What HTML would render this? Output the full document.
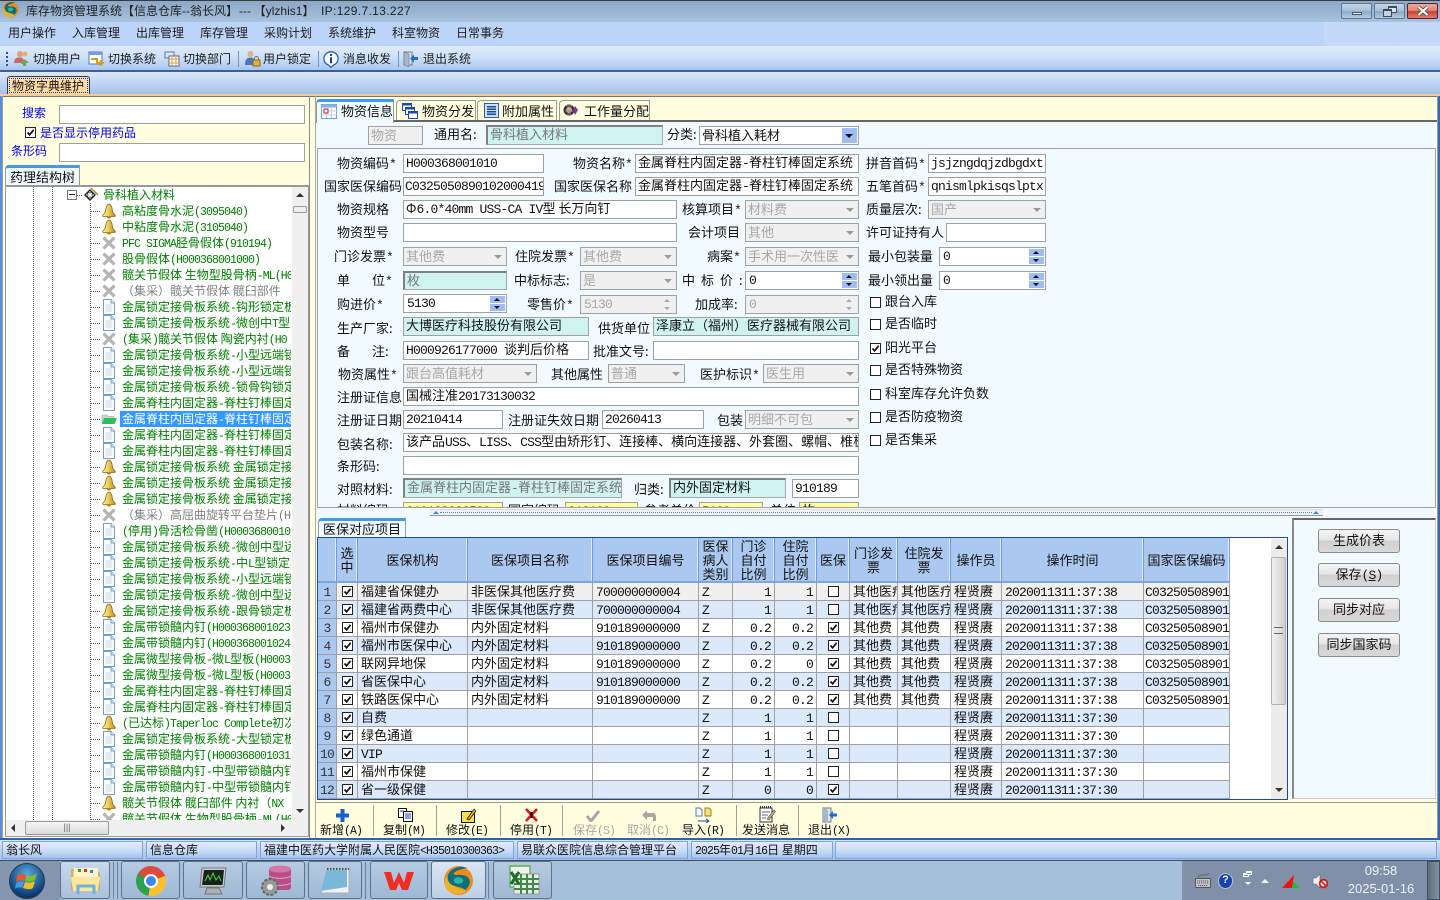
<!DOCTYPE html>
<html lang="zh"><head><meta charset="utf-8"><title>库存物资管理系统</title>
<style>
html,body{margin:0;padding:0}
body{width:1440px;height:900px;overflow:hidden;position:relative;background:#ffffe0;font:13px/1.2 "WenQuanYi Zen Hei","Noto Sans CJK SC",sans-serif;color:#111}
div,span,svg{box-sizing:border-box}
i{font:normal 13px/1 "Liberation Mono",monospace;letter-spacing:-.8px}
.tr i,.st i,.lb i{font-size:11.5px;letter-spacing:-.9px}
.a,.l,.f,.c,.sb,.cb,.mi,.ti,.bt,.st,.tb{position:absolute}
.l{white-space:pre;line-height:17px;height:19px}
.f{height:19px;line-height:13px;background:#fff;border:1px solid #a0a0a0;padding-left:2px;white-space:nowrap;overflow:hidden}
.y{background:#cff3f1;border:1px solid #a8a8a8;border-left:2px solid #808080;border-top:2px solid #808080;line-height:13px}
.c{height:19px;line-height:16px;background:#f0f0f0;border:1px solid #a0a0a0;color:#a8a8a8;padding-left:2px;white-space:nowrap;overflow:hidden}
.c:after{content:"";position:absolute;right:4px;top:7px;border:4px solid transparent;border-top:4px solid #999;border-bottom:0}
.c.nd{line-height:15px}
.c.nd:after{display:none}
.sb{height:19px;line-height:13px;background:#fff;border:1px solid #a0a0a0;padding-left:3px}
.sb u,.sb s{position:absolute;right:1px;width:15px;height:7px;background:#9fbcf5;text-decoration:none}
.sb u{top:1px}.sb s{top:9px}
.sb u:after,.sb s:after{content:"";position:absolute;left:4px;top:2px;border:3px solid transparent}
.sb u:after{border-bottom:3px solid #111;border-top:0}.sb s:after{border-top:3px solid #111;border-bottom:0}
.sb.d{background:#f0f0f0;color:#a8a8a8}.sb.d u,.sb.d s{background:#f0f0f0}
.sb.d u:after{border-bottom-color:#aaa}.sb.d s:after{border-top-color:#aaa}
.cb{width:11px;height:11px;display:block}
.mi{top:24px;font-size:12px;line-height:18px;color:#1c1c1c}
.ti{top:50px;font-size:12px;line-height:18px;color:#1c1c1c}
.sp{position:absolute;top:51px;width:1px;height:16px;background:#7d93b5}
.t{position:absolute;height:20px;line-height:19px;background:#ffffe0;border:1px solid #999;border-bottom:0;border-radius:4px 0 0 0;text-align:center;white-space:nowrap;overflow:hidden}
.t.on{background:#f0faff;border-top:3px solid #3d9be9;line-height:17px}
.tr{position:absolute;left:5px;top:187px;width:286px;height:633px;overflow:hidden;font-size:12px;white-space:nowrap;color:#008000}
.r{height:16px;line-height:16px;padding-left:117px;position:relative}
.r svg{position:absolute;left:96px;top:0;width:16px;height:16px}
.r:before{content:"";position:absolute;left:86px;top:8px;width:9px;border-top:1px dotted #555}
.r.o:before{display:none}
.g{color:#808080}
.v{position:absolute;border-left:1px dotted #555}
table{border-collapse:separate;border-spacing:0;table-layout:fixed;width:912px;position:absolute;left:0;top:0}
th{height:45px;box-sizing:border-box;padding:0;background:#abc9f0;font-weight:normal;line-height:14px;border-right:1px solid #6f9ad8;border-bottom:2px solid #7fa6e0;box-shadow:inset -1px 0 #dfeaff;overflow:hidden}
tr{height:18px}
td{height:18px;padding:0 0 0 3px;border-right:1px solid #a0a0a0;border-bottom:1px solid #a0a0a0;overflow:hidden;white-space:nowrap;line-height:15px;vertical-align:top;box-sizing:border-box}
td.n{background:#abc9f0;text-align:center;padding:0;color:#333}
td.k{padding:0;text-align:center}td.k svg{display:block;margin:3px auto 0;width:11px;height:11px}
td.d{text-align:right;padding:0 3px 0 0}
tr.w td{background:#fff}tr.b td{background:#dce9fb}tr.h td{background:#f0f0f0}
tr td.n{background:#abc9f0}
.bt{left:1318px;width:82px;height:24px;line-height:20px;border:1px solid #8a8a8a;border-radius:3px;text-align:center;background:linear-gradient(#f4f4f4,#e6e6e6 45%,#d0d0d0 50%,#d8d8d8);color:#111}
.st{top:841px;height:18px;line-height:16px;font-size:12px;padding-left:3px;border:1px solid #7fa5d8;background:linear-gradient(#e2edfc,#c8dcf7 55%,#a5c3ee);white-space:nowrap;overflow:hidden}
.tb{top:861px;height:38px;border:1px solid #5f7286;border-radius:3px;background:linear-gradient(#b6cbe2,#9fb8d4)}
.lb{position:absolute;top:821px;width:62px;text-align:center;line-height:17px;height:15px;overflow:hidden;white-space:nowrap;font-size:12px}
.gy{color:#a8a8a8}
.sep{position:absolute;top:805px;width:1px;height:31px;background:#a0a0a0}
.ic{position:absolute}
</style></head><body>
<svg width="0" height="0" style="position:absolute">
<defs>
<linearGradient id="gd" x1="0" x2="1"><stop offset="0" stop-color="#fff2a8"/><stop offset=".5" stop-color="#eec850"/><stop offset="1" stop-color="#b08a20"/></linearGradient>
<symbol id="b" viewBox="0 0 16 16"><path d="M8 1C5.5 1.6 5 4.5 4.6 7.5 4.3 10 2.6 11.2 1.6 12.6L2 13.5H14L14.4 12.6C13.4 11.2 11.7 10 11.4 7.5 11 4.5 10.5 1.6 8 1Z" fill="url(#gd)" stroke="#8a6c18" stroke-width=".8"/><ellipse cx="8" cy="14.2" rx="2" ry="1.3" fill="#b08a20"/></symbol>
<symbol id="x" viewBox="0 0 16 16"><path d="M2.5 2.5L13.5 13.5M13.5 2.5L2.5 13.5" stroke="#b4b4b4" stroke-width="3.2"/></symbol>
<symbol id="d" viewBox="0 0 16 16"><path d="M2.5 .5H10L13.5 4V15.5H2.5Z" fill="#fff" stroke="#6c9cd0"/><path d="M10 .5V4H13.5" fill="#e4eefa" stroke="#6c9cd0"/><path d="M4.5 6H11.5M4.5 8H11.5M4.5 10H11.5M4.5 12H11.5" stroke="#cfd8e4"/></symbol>
<symbol id="ck" viewBox="0 0 11 11"><rect x=".5" y=".5" width="10" height="10" fill="#fff" stroke="#222"/><path d="M2.5 5.5L4.6 7.8 8.6 2.8" fill="none" stroke="#111" stroke-width="1.7"/></symbol>
<symbol id="un" viewBox="0 0 11 11"><rect x=".5" y=".5" width="10" height="10" fill="#fff" stroke="#222"/></symbol>
<symbol id="lg" viewBox="0 0 32 32"><circle cx="16" cy="16" r="15" fill="#ef8a1d"/><path d="M1.5 20C5 31 17 33 24 27 20 24 9 26 6 10 2 13 1 17 1.5 20Z" fill="#efb02a"/><path d="M25 3C14-1 3 7 5 15 7 24 19 21 23 26 28 21 29 17 26 13 21 8 12 12 11 9 12 6 20 4 25 3Z" fill="#0f6f78"/><ellipse cx="16" cy="16" rx="5" ry="3.5" fill="#2bb3a4"/></symbol>
</defs></svg>

<!-- title bar -->
<div class="a" style="left:0;top:0;width:1440px;height:22px;background:linear-gradient(#3a3a3a 0,#3a3a3a 1px,#8ba8c6 1px,#a8c2df)"></div>
<svg class="ic" style="left:2px;top:1px" width="17" height="17"><use href="#lg"/></svg>
<div class="a" style="left:26px;top:2px;font-size:12px;line-height:18px;color:#222;white-space:pre">库存物资管理系统【信息仓库<span style="font-family:'Liberation Sans'">--</span>翁长风】<span style="font-family:'Liberation Sans';margin-left:1px">---</span> 【<span style="font-family:'Liberation Sans'">ylzhis1</span>】</div>
<div class="a" style="left:321px;top:2px;font:12px/18px 'Liberation Sans',sans-serif;color:#222;letter-spacing:.35px;white-space:pre">IP:129.7.13.227</div>
<div class="a" style="left:1341px;top:3px;width:31px;height:16px;border:1px solid #5e7690;border-radius:2px;background:linear-gradient(#c4d6e8,#a5bdd6 50%,#8fa9c5 55%,#b5cadf)"><div class="a" style="left:10px;top:8px;width:10px;height:3px;background:#e6eaef;border:1px solid #4a5866"></div></div>
<div class="a" style="left:1374px;top:3px;width:31px;height:16px;border:1px solid #5e7690;border-radius:2px;background:linear-gradient(#c4d6e8,#a5bdd6 50%,#8fa9c5 55%,#b5cadf)"><div class="a" style="left:13px;top:2px;width:9px;height:7px;border:1px solid #3e4c5a;border-top-width:2px;background:#dfe6ee"></div><div class="a" style="left:8px;top:5px;width:9px;height:8px;border:1px solid #3e4c5a;border-top-width:2px;background:#c6d2de"></div></div>
<div class="a" style="left:1407px;top:3px;width:31px;height:16px;border:1px solid #5b2030;border-radius:2px;background:linear-gradient(#eba89a,#e08a78 45%,#cc3f30 55%,#e08070)"><svg class="ic" style="left:9px;top:2px" width="12" height="10"><path d="M1.5 1L10.5 9M10.5 1L1.5 9" stroke="#3a3a3a" stroke-width="3.6"/><path d="M1.5 1L10.5 9M10.5 1L1.5 9" stroke="#f4f4f4" stroke-width="2.2"/></svg></div>

<!-- menu -->
<div class="a" style="left:0;top:22px;width:1440px;height:24px;background:#c3d9f7"></div>
<div class="a" style="left:0;top:22px;width:1324px;height:24px;background:#bcd4f8"></div>
<span class="mi" style="left:8px">用户操作</span><span class="mi" style="left:72px">入库管理</span><span class="mi" style="left:136px">出库管理</span><span class="mi" style="left:200px">库存管理</span><span class="mi" style="left:264px">采购计划</span><span class="mi" style="left:328px">系统维护</span><span class="mi" style="left:392px">科室物资</span><span class="mi" style="left:456px">日常事务</span>

<!-- toolbar -->
<div class="a" style="left:0;top:46px;width:1440px;height:26px;background:linear-gradient(#dfeafb,#cddff8 50%,#a8c6f0);border-bottom:2px solid #3d5f95"></div>
<div class="a" style="left:6px;top:52px;width:2px;height:14px;border-left:2px dotted #33527f"></div>
<svg class="ic" style="left:13px;top:50px" width="17" height="17" viewBox="0 0 17 17"><circle cx="7" cy="4" r="3" fill="#e0a070"/><circle cx="12" cy="4" r="2.6" fill="#e8b080"/><path d="M1 13C1 8 4 7.5 7 7.5S11 9 11 13Z" fill="#c86a6a"/><path d="M8 14L12 9 16 13 13 13V16H10V14Z" fill="#60b050"/></svg>
<span class="ti" style="left:33px">切换用户</span>
<svg class="ic" style="left:88px;top:51px" width="17" height="17" viewBox="0 0 17 17"><rect x="1" y="1" width="13" height="12" fill="#fff" stroke="#4a78c0"/><rect x="1" y="1" width="13" height="3" fill="#6f9fe0"/><path d="M3 8H9L9 12 15 12M12 9.5L15 12 12 14.5" fill="none" stroke="#e09a18" stroke-width="2"/></svg>
<span class="ti" style="left:108px">切换系统</span>
<svg class="ic" style="left:164px;top:51px" width="16" height="16" viewBox="0 0 16 16"><rect x="1" y="1" width="9" height="6" fill="#dfe8f4" stroke="#4a78c0"/><rect x="5" y="5" width="10" height="10" fill="#fff" stroke="#666"/><path d="M5 8H15M8 5V15M12 5V15M5 12H15" stroke="#e09a48"/></svg>
<span class="ti" style="left:183px">切换部门</span>
<div class="sp" style="left:238px"></div>
<svg class="ic" style="left:244px;top:50px" width="17" height="17" viewBox="0 0 17 17"><circle cx="6.5" cy="4" r="3" fill="#e3b090"/><path d="M1 15C1 9 3.5 7.5 6.5 7.5S10 9 11 11V15Z" fill="#4a78c0"/><rect x="9" y="10" width="7" height="6" fill="#e8b030" stroke="#8a6a10"/><path d="M10.5 10V8.5A2 2 0 0 1 14.5 8.5V10" fill="none" stroke="#777"/></svg>
<span class="ti" style="left:263px">用户锁定</span>
<div class="sp" style="left:318px"></div>
<svg class="ic" style="left:323px;top:51px" width="16" height="17" viewBox="0 0 16 17"><path d="M8 .8A7 6.8 0 0 0 5.5 14L8 16.4 10.5 14A7 6.8 0 0 0 8 .8Z" fill="#fff" stroke="#2a62b0" stroke-width="1.3"/><rect x="7" y="3" width="2" height="2" fill="#12408a"/><rect x="7" y="6.3" width="2" height="6" fill="#12408a"/></svg>
<span class="ti" style="left:343px">消息收发</span>
<div class="sp" style="left:398px"></div>
<svg class="ic" style="left:403px;top:50px" width="16" height="17" viewBox="0 0 16 17"><rect x="1" y="2" width="8" height="13" fill="#dde4ee" stroke="#6c7a90"/><path d="M1 2L6 4V17L1 15Z" fill="#a9b5c8" stroke="#6c7a90" stroke-width=".6"/><path d="M15 7H11V4.5L7 8.5 11 12.5V10H15Z" fill="#1f6ad8"/></svg>
<span class="ti" style="left:423px">退出系统</span>

<!-- tab strip -->
<div class="a" style="left:0;top:72px;width:1440px;height:23px;background:linear-gradient(#dde9fb,#a0bfea)"></div>
<div class="a" style="left:7px;top:76px;width:83px;height:19px;background:#ffd9a6;border:1px solid #1a3a78;border-bottom:0;border-radius:3px 3px 0 0;padding-left:4px;font-size:12px;line-height:17px;white-space:nowrap;outline:1px dotted #1a3a78;outline-offset:-3px">物资字典维护</div>
<div class="a" style="left:0;top:94px;width:1440px;height:2px;background:#ffc98c"></div>
<div class="a" style="left:0;top:96px;width:1440px;height:1px;background:#777"></div>

<!-- window edges -->
<div class="a" style="left:0;top:96px;width:3px;height:743px;background:#5b8fd9;border-right:1px solid #9a9a9a"></div>
<div class="a" style="left:1437px;top:96px;width:3px;height:743px;background:#2f68bd;border-left:1px solid #9a9a9a"></div>

<!-- left panel -->
<div class="a" style="left:309px;top:96px;width:1px;height:743px;background:#888"></div>
<div class="a" style="left:315px;top:96px;width:1px;height:743px;background:#aaa"></div>
<span class="l" style="left:22px;top:104px;font-size:12px;color:#0000f0">搜索</span>
<div class="f" style="left:59px;top:105px;width:246px"></div>
<svg class="cb" style="left:25px;top:127px"><use href="#ck"/></svg>
<span class="l" style="left:40px;top:124px;font-size:12px;color:#0000f0">是否显示停用药品</span>
<span class="l" style="left:11px;top:142px;font-size:12px;color:#0000f0">条形码</span>
<div class="f" style="left:59px;top:143px;width:246px"></div>
<div class="t on" style="left:5px;top:165px;width:75px;height:21px">药理结构树</div>
<div class="a" style="left:5px;top:185px;width:304px;height:1px;background:#999"></div>
<div class="a" style="left:5px;top:186px;width:304px;height:651px;background:#fff;border:1px solid #999"></div>
<div class="v" style="left:33px;top:187px;height:633px"></div><div class="v" style="left:52px;top:187px;height:633px"></div><div class="v" style="left:90px;top:203px;height:617px"></div>
<div class="a" style="left:67px;top:190px;width:10px;height:10px;border:1px solid #777;background:#fff"><div class="a" style="left:1px;top:3px;width:6px;height:1px;background:#222"></div></div>
<div class="a" style="left:77px;top:195px;width:5px;border-top:1px dotted #555"></div>
<div class="tr">
<div class="r o" style="padding-left:98px"><svg style="left:77px;top:0" viewBox="0 0 16 16"><path d="M2 8L8 2 14 8 8 14Z" fill="#222"/><path d="M4 8H12M8 4V12M6 6L10 10M10 6L6 10" stroke="#fff"/><path d="M9 1L16 8" stroke="#b08a20" stroke-width="1.4"/></svg>骨科植入材料</div>
<div class="r"><svg><use href="#b"/></svg>高粘度骨水泥<i>(3095040)</i></div>
<div class="r"><svg><use href="#b"/></svg>中粘度骨水泥<i>(3105040)</i></div>
<div class="r"><svg><use href="#x"/></svg><i>PFC SIGMA</i>胫骨假体<i>(910194)</i></div>
<div class="r"><svg><use href="#x"/></svg>股骨假体<i>(H000368001000)</i></div>
<div class="r"><svg><use href="#x"/></svg>髋关节假体 生物型股骨柄<i>-ML(H0</i></div>
<div class="r g"><svg><use href="#x"/></svg>（集采）髋关节假体 髋臼部件</div>
<div class="r"><svg><use href="#d"/></svg>金属锁定接骨板系统<i>-</i>钩形锁定板</div>
<div class="r"><svg><use href="#d"/></svg>金属锁定接骨板系统<i>-</i>微创中<i>T</i>型支架</div>
<div class="r"><svg><use href="#x"/></svg><i>(</i>集采<i>)</i>髋关节假体  陶瓷内衬<i>(H0</i></div>
<div class="r"><svg><use href="#d"/></svg>金属锁定接骨板系统<i>-</i>小型远端锁定</div>
<div class="r"><svg><use href="#d"/></svg>金属锁定接骨板系统<i>-</i>小型远端锁定</div>
<div class="r"><svg><use href="#d"/></svg>金属锁定接骨板系统<i>-</i>锁骨钩锁定板</div>
<div class="r"><svg><use href="#d"/></svg>金属脊柱内固定器<i>-</i>脊柱钉棒固定系统</div>
<div class="r" style="color:#fff"><svg viewBox="0 0 16 16"><path d="M1 4H6L7 5.5H13V12H1Z" fill="#cfd6cc" stroke="#999" stroke-width=".5"/><path d="M3 7H16L13.5 13H1Z" fill="#28c060"/></svg><span style="display:inline-block;width:171px;margin-left:-2px;padding-left:2px;background:#3399ff">金属脊柱内固定器<i>-</i>脊柱钉棒固定系统</span></div>
<div class="r"><svg><use href="#d"/></svg>金属脊柱内固定器<i>-</i>脊柱钉棒固定系统</div>
<div class="r"><svg><use href="#d"/></svg>金属脊柱内固定器<i>-</i>脊柱钉棒固定系统</div>
<div class="r"><svg><use href="#b"/></svg>金属锁定接骨板系统 金属锁定接骨板</div>
<div class="r"><svg><use href="#b"/></svg>金属锁定接骨板系统 金属锁定接骨板</div>
<div class="r"><svg><use href="#b"/></svg>金属锁定接骨板系统 金属锁定接骨板</div>
<div class="r g"><svg><use href="#x"/></svg>（集采）高屈曲旋转平台垫片<i>(H00</i></div>
<div class="r"><svg><use href="#d"/></svg><i>(</i>停用<i>)</i>骨活检骨凿<i>(H0003680010</i></div>
<div class="r"><svg><use href="#d"/></svg>金属锁定接骨板系统<i>-</i>微创中型远端</div>
<div class="r"><svg><use href="#d"/></svg>金属锁定接骨板系统<i>-</i>中<i>L</i>型锁定板</div>
<div class="r"><svg><use href="#d"/></svg>金属锁定接骨板系统<i>-</i>小型远端锁定</div>
<div class="r"><svg><use href="#d"/></svg>金属锁定接骨板系统<i>-</i>微创中型远端</div>
<div class="r"><svg><use href="#b"/></svg>金属锁定接骨板系统<i>-</i>跟骨锁定板</div>
<div class="r"><svg><use href="#d"/></svg>金属带锁髓内钉<i>(H000368001023</i></div>
<div class="r"><svg><use href="#d"/></svg>金属带锁髓内钉<i>(H000368001024</i></div>
<div class="r"><svg><use href="#d"/></svg>金属微型接骨板<i>-</i>微<i>L</i>型板<i>(H00030</i></div>
<div class="r"><svg><use href="#d"/></svg>金属微型接骨板<i>-</i>微<i>L</i>型板<i>(H00030</i></div>
<div class="r"><svg><use href="#d"/></svg>金属脊柱内固定器<i>-</i>脊柱钉棒固定系统</div>
<div class="r"><svg><use href="#d"/></svg>金属脊柱内固定器<i>-</i>脊柱钉棒固定系统</div>
<div class="r"><svg><use href="#b"/></svg><i>(</i>已达标<i>)Taperloc Complete</i>初次</div>
<div class="r"><svg><use href="#d"/></svg>金属锁定接骨板系统<i>-</i>大型锁定板</div>
<div class="r"><svg><use href="#d"/></svg>金属带锁髓内钉<i>(H000368001031</i></div>
<div class="r"><svg><use href="#d"/></svg>金属带锁髓内钉<i>-</i>中型带锁髓内钉</div>
<div class="r"><svg><use href="#d"/></svg>金属带锁髓内钉<i>-</i>中型带锁髓内钉</div>
<div class="r"><svg><use href="#b"/></svg>髋关节假体 髋臼部件 内衬（<i>NX</i></div>
<div class="r"><svg><use href="#x"/></svg>髋关节假体 生物型股骨柄<i>-ML(H0</i></div>
</div>
<!-- left scrollbars -->
<div class="a" style="left:292px;top:187px;width:16px;height:633px;background:#f0f0f0"></div>
<div class="a" style="left:296px;top:193px;border:4px solid transparent;border-bottom:4px solid #333;border-top:0"></div>
<div class="a" style="left:293px;top:206px;width:14px;height:7px;border:1px solid #999;border-radius:2px;background:#eee"></div>
<div class="a" style="left:296px;top:809px;border:4px solid transparent;border-top:4px solid #333;border-bottom:0"></div>
<div class="a" style="left:6px;top:820px;width:302px;height:16px;background:#f0f0f0"></div>
<div class="a" style="left:11px;top:824px;border:4px solid transparent;border-right:4px solid #333;border-left:0"></div>
<div class="a" style="left:281px;top:824px;border:4px solid transparent;border-left:4px solid #333;border-right:0"></div>
<div class="a" style="left:25px;top:821px;width:84px;height:14px;border:1px solid #999;border-radius:2px;background:linear-gradient(#f6f6f6,#dcdcdc);text-align:center;font:9px/11px 'Liberation Sans';color:#666">|||</div>

<!-- right tabs -->
<div class="a" style="left:316px;top:120px;width:1121px;height:2px;background:#666"></div>
<div class="a" style="left:316px;top:122px;width:1120px;height:677px;background:#f0faff"></div>
<div class="t on" style="left:316px;top:99px;width:78px;height:24px;padding-left:24px;text-align:left">物资信息</div>
<svg class="ic" style="left:321px;top:104px" width="16" height="15" viewBox="0 0 16 15"><rect x=".5" y=".5" width="15" height="14" fill="#fff" stroke="#6f9fe0"/><rect x=".5" y=".5" width="15" height="3" fill="#8ab0e8"/><path d="M5.5 3V14M10.5 3V14M.5 7H15.5M.5 11H15.5" stroke="#bcd0ec"/><rect x="3" y="5" width="4" height="4" fill="#fff" stroke="#c02020"/></svg>
<div class="t" style="left:396px;top:100px;width:80px;padding-left:25px;text-align:left">物资分发</div>
<svg class="ic" style="left:402px;top:103px" width="16" height="16" viewBox="0 0 16 16"><rect x=".5" y=".5" width="9" height="7" fill="#fff" stroke="#1848b0"/><rect x=".5" y=".5" width="9" height="2" fill="#1848b0"/><rect x="3.5" y="4.5" width="9" height="7" fill="#fff" stroke="#1848b0"/><rect x="3.5" y="4.5" width="9" height="2" fill="#1848b0"/><rect x="6.5" y="8.5" width="9" height="7" fill="#fff" stroke="#1848b0"/><rect x="6.5" y="8.5" width="9" height="2" fill="#1848b0"/></svg>
<div class="t" style="left:477px;top:100px;width:80px;padding-left:24px;text-align:left">附加属性</div>
<svg class="ic" style="left:484px;top:103px" width="15" height="15" viewBox="0 0 15 15"><rect x=".5" y=".5" width="14" height="14" fill="#cfe0f6" stroke="#2a62b0"/><rect x="3" y="3" width="9" height="9" fill="#1848a0"/><path d="M3 5H12M3 7.5H12M3 10H12" stroke="#cfe0f6"/></svg>
<div class="t" style="left:559px;top:100px;width:91px;padding-left:24px;text-align:left">工作量分配</div>
<svg class="ic" style="left:563px;top:103px" width="17" height="15" viewBox="0 0 17 15"><circle cx="6" cy="7" r="5.5" fill="#333"/><circle cx="6" cy="7" r="3" fill="#d0a890"/><path d="M3 3L9 3M2 8H10M4 11H8" stroke="#888"/><path d="M12 3L15 7 12 12 10 7Z" fill="#8a2aa0"/></svg>

<!-- header row -->
<div class="c nd" style="left:368px;top:126px;width:55px">物资</div>
<span class="l" style="left:434px;top:125px">通用名:</span>
<div class="f y" style="left:486px;top:125px;width:177px;height:20px;color:#777">骨科植入材料</div>
<span class="l" style="left:667px;top:125px">分类:</span>
<div class="f" style="left:699px;top:126px;width:160px;padding-left:2px;line-height:15px">骨科植入耗材</div>
<div class="a" style="left:842px;top:128px;width:15px;height:15px;background:#9fbcf5"><div class="a" style="left:3px;top:6px;border:4px solid transparent;border-top:4px solid #111;border-bottom:0"></div></div>
<!-- form panel -->
<div class="a" style="left:317px;top:148px;width:1119px;height:360px;border:1px solid #a0a0a0"></div>

<span class="l" style="left:337px;top:154px">物资编码<i>*</i></span><div class="f" style="left:403px;top:154px;width:141px"><i>H000368001010</i></div>
<span class="l" style="left:573px;top:154px">物资名称<i>*</i></span><div class="f" style="left:635px;top:154px;width:224px">金属脊柱内固定器<i>-</i>脊柱钉棒固定系统</div>
<span class="l" style="left:866px;top:154px">拼音首码<i>*</i></span><div class="f" style="left:928px;top:154px;width:118px"><i>jsjzngdqjzdbgdxt</i></div>

<span class="l" style="left:324px;top:177px">国家医保编码</span><div class="f" style="left:403px;top:177px;width:141px;padding-left:1px"><i>C0325050890102000419</i></div>
<span class="l" style="left:554px;top:177px">国家医保名称</span><div class="f" style="left:635px;top:177px;width:224px">金属脊柱内固定器<i>-</i>脊柱钉棒固定系统</div>
<span class="l" style="left:866px;top:177px">五笔首码<i>*</i></span><div class="f" style="left:928px;top:177px;width:118px"><i>qnismlpkisqslptx</i></div>

<span class="l" style="left:337px;top:200px">物资规格</span><div class="f" style="left:403px;top:200px;width:274px">Φ<i>6.0*40mm USS-CA IV</i>型 长万向钉</div>
<span class="l" style="left:682px;top:200px">核算项目<i>*</i></span><div class="c" style="left:745px;top:200px;width:114px">材料费</div>
<span class="l" style="left:866px;top:200px">质量层次:</span><div class="c" style="left:928px;top:200px;width:118px">国产</div>

<span class="l" style="left:337px;top:223px">物资型号</span><div class="f" style="left:403px;top:223px;width:274px"></div>
<span class="l" style="left:688px;top:223px">会计项目</span><div class="c" style="left:745px;top:223px;width:114px">其他</div>
<span class="l" style="left:866px;top:223px">许可证持有人</span><div class="f" style="left:946px;top:223px;width:100px"></div>

<span class="l" style="left:334px;top:247px">门诊发票<i>*</i></span><div class="c" style="left:403px;top:247px;width:104px">其他费</div>
<span class="l" style="left:515px;top:247px">住院发票<i>*</i></span><div class="c" style="left:580px;top:247px;width:97px">其他费</div>
<span class="l" style="left:707px;top:247px">病案<i>*</i></span><div class="c" style="left:745px;top:247px;width:114px">手术用一次性医</div>
<span class="l" style="left:868px;top:247px">最小包装量</span><div class="sb" style="left:939px;top:247px;width:107px"><i>0</i><u></u><s></s></div>

<span class="l" style="left:337px;top:271px"><span style="letter-spacing:22px">单</span>位<i>*</i></span><div class="f y" style="left:403px;top:271px;width:104px;color:#777">枚</div>
<span class="l" style="left:514px;top:271px">中标标志:</span><div class="c" style="left:580px;top:271px;width:97px">是</div>
<span class="l" style="left:682px;top:271px"><span style="letter-spacing:6px">中标价</span>:</span><div class="sb" style="left:745px;top:271px;width:114px"><i>0</i><u></u><s></s></div>
<span class="l" style="left:868px;top:271px">最小领出量</span><div class="sb" style="left:939px;top:271px;width:107px"><i>0</i><u></u><s></s></div>

<span class="l" style="left:337px;top:295px">购进价<i>*</i></span><div class="sb" style="left:403px;top:294px;width:104px"><i>5130</i><u></u><s></s></div>
<span class="l" style="left:527px;top:295px">零售价<i>*</i></span><div class="sb d" style="left:580px;top:295px;width:97px"><i>5130</i><u></u><s></s></div>
<span class="l" style="left:695px;top:295px">加成率:</span><div class="sb d" style="left:745px;top:295px;width:114px"><i>0</i><u></u><s></s></div>

<span class="l" style="left:337px;top:319px">生产厂家:</span><div class="f y" style="left:403px;top:317px;width:186px;border-width:1px;border-color:#a0a0a0">大博医疗科技股份有限公司</div>
<span class="l" style="left:598px;top:319px">供货单位</span><div class="f y" style="left:653px;top:317px;width:206px;border-width:1px;border-color:#a0a0a0">泽康立（福州）医疗器械有限公司</div>

<span class="l" style="left:337px;top:342px"><span style="letter-spacing:22px">备</span>注:</span><div class="f" style="left:403px;top:341px;width:186px"><i>H000926177000  </i>谈判后价格</div>
<span class="l" style="left:593px;top:342px">批准文号:</span><div class="f" style="left:653px;top:341px;width:206px"></div>

<span class="l" style="left:338px;top:365px">物资属性<i>*</i></span><div class="c" style="left:403px;top:364px;width:134px">跟台高值耗材</div>
<span class="l" style="left:551px;top:365px">其他属性</span><div class="c" style="left:608px;top:364px;width:77px">普通</div>
<span class="l" style="left:700px;top:365px">医护标识<i>*</i></span><div class="c" style="left:763px;top:364px;width:96px">医生用</div>

<span class="l" style="left:337px;top:388px">注册证信息</span><div class="f" style="left:403px;top:387px;width:456px">国械注准<i>20173130032</i></div>
<span class="l" style="left:337px;top:411px">注册证日期</span><div class="f" style="left:403px;top:410px;width:100px"><i>20210414</i></div>
<span class="l" style="left:508px;top:411px">注册证失效日期</span><div class="f" style="left:602px;top:410px;width:102px"><i>20260413</i></div>
<span class="l" style="left:717px;top:411px">包装</span><div class="c" style="left:745px;top:410px;width:114px">明细不可包</div>
<span class="l" style="left:337px;top:435px">包装名称:</span><div class="f" style="left:403px;top:433px;width:456px">该产品<i>USS</i>、<i>LISS</i>、<i>CSS</i>型由矫形钉、连接棒、横向连接器、外套圈、螺帽、椎板</div>
<span class="l" style="left:337px;top:457px">条形码:</span><div class="f" style="left:403px;top:456px;width:456px"></div>
<span class="l" style="left:337px;top:480px">对照材料:</span><div class="f y" style="left:403px;top:478px;width:219px;height:20px;color:#777">金属脊柱内固定器<i>-</i>脊柱钉棒固定系统</div>
<span class="l" style="left:634px;top:480px">归类:</span><div class="f y" style="left:669px;top:478px;width:117px;height:20px">内外固定材料</div>
<div class="f" style="left:792px;top:479px;width:67px"><i>910189</i></div>

<div class="a" style="left:318px;top:502px;width:560px;height:5px;overflow:hidden">
<span class="l" style="left:19px;top:-1px">材料编码</span>
<div class="f" style="left:85px;top:0;width:100px;background:#ffffa0"><i>010189006500</i></div>
<span class="l" style="left:190px;top:-1px">国家编码</span>
<div class="f" style="left:247px;top:0;width:73px;background:#ffffa0"><i>910189</i></div>
<span class="l" style="left:326px;top:-1px">参考单价</span>
<div class="f" style="left:381px;top:0;width:64px;background:#ffffa0"><i>5130</i></div>
<span class="l" style="left:452px;top:-1px">单位</span>
<div class="f" style="left:481px;top:0;width:60px;background:#ffffa0">枚</div>
</div>

<svg class="cb" style="left:870px;top:297px"><use href="#un"/></svg><span class="l" style="left:885px;top:292px">跟台入库</span>
<svg class="cb" style="left:870px;top:319px"><use href="#un"/></svg><span class="l" style="left:885px;top:314px">是否临时</span>
<svg class="cb" style="left:870px;top:343px"><use href="#ck"/></svg><span class="l" style="left:885px;top:338px">阳光平台</span>
<svg class="cb" style="left:870px;top:365px"><use href="#un"/></svg><span class="l" style="left:885px;top:360px">是否特殊物资</span>
<svg class="cb" style="left:870px;top:389px"><use href="#un"/></svg><span class="l" style="left:885px;top:384px">科室库存允许负数</span>
<svg class="cb" style="left:870px;top:412px"><use href="#un"/></svg><span class="l" style="left:885px;top:407px">是否防疫物资</span>
<svg class="cb" style="left:870px;top:435px"><use href="#un"/></svg><span class="l" style="left:885px;top:430px">是否集采</span>

<!-- splitter -->
<div class="a" style="left:430px;top:509px;width:893px;height:7px;background:#f0f0f0;border-bottom:1px solid #999;border-top:1px solid #ddd"></div>
<div class="a" style="left:440px;top:512px;width:872px;height:1px;border-top:1px dotted #3d8be0"></div>
<div class="a" style="left:433px;top:511px;border:3px solid transparent;border-bottom:3px solid #3d8be0;border-top:0"></div>
<div class="a" style="left:1313px;top:511px;border:3px solid transparent;border-bottom:3px solid #3d8be0;border-top:0"></div>

<!-- grid -->
<div class="t on" style="left:318px;top:518px;width:88px;height:20px;line-height:15px;background:#f0faff">医保对应项目</div>
<div class="a" style="left:317px;top:537px;width:971px;height:263px;background:#fff;border:1px solid #1c4a9c;overflow:hidden">
<table>
<colgroup><col style="width:19px"><col style="width:21px"><col style="width:110px"><col style="width:125px"><col style="width:106px"><col style="width:34px"><col style="width:42px"><col style="width:42px"><col style="width:33px"><col style="width:48px"><col style="width:53px"><col style="width:51px"><col style="width:142px"><col style="width:86px"></colgroup>
<tr style="height:45px"><th></th><th>选<br>中</th><th>医保机构</th><th>医保项目名称</th><th>医保项目编号</th><th>医保<br>病人<br>类别</th><th>门诊<br>自付<br>比例</th><th>住院<br>自付<br>比例</th><th>医保</th><th>门诊发<br>票</th><th>住院发<br>票</th><th>操作员</th><th>操作时间</th><th>国家医保编码</th></tr>
<tr class="h"><td class="n"><i>1</i></td><td class="k"><svg><use href="#ck"/></svg></td><td>福建省保健办</td><td>非医保其他医疗费</td><td><i>700000000004</i></td><td><i>Z</i></td><td class="d"><i>1</i></td><td class="d"><i>1</i></td><td class="k"><svg><use href="#un"/></svg></td><td>其他医疗费</td><td>其他医疗费</td><td>程贤赓</td><td><i>2020011311:37:38</i></td><td style="padding-left:1px"><i>C03250508901</i></td></tr>
<tr class="b"><td class="n"><i>2</i></td><td class="k"><svg><use href="#ck"/></svg></td><td>福建省两费中心</td><td>非医保其他医疗费</td><td><i>700000000004</i></td><td><i>Z</i></td><td class="d"><i>1</i></td><td class="d"><i>1</i></td><td class="k"><svg><use href="#un"/></svg></td><td>其他医疗费</td><td>其他医疗费</td><td>程贤赓</td><td><i>2020011311:37:38</i></td><td style="padding-left:1px"><i>C03250508901</i></td></tr>
<tr class="w"><td class="n"><i>3</i></td><td class="k"><svg><use href="#ck"/></svg></td><td>福州市保健办</td><td>内外固定材料</td><td><i>910189000000</i></td><td><i>Z</i></td><td class="d"><i>0.2</i></td><td class="d"><i>0.2</i></td><td class="k"><svg><use href="#ck"/></svg></td><td>其他费</td><td>其他费</td><td>程贤赓</td><td><i>2020011311:37:38</i></td><td style="padding-left:1px"><i>C03250508901</i></td></tr>
<tr class="b"><td class="n"><i>4</i></td><td class="k"><svg><use href="#ck"/></svg></td><td>福州市医保中心</td><td>内外固定材料</td><td><i>910189000000</i></td><td><i>Z</i></td><td class="d"><i>0.2</i></td><td class="d"><i>0.2</i></td><td class="k"><svg><use href="#ck"/></svg></td><td>其他费</td><td>其他费</td><td>程贤赓</td><td><i>2020011311:37:38</i></td><td style="padding-left:1px"><i>C03250508901</i></td></tr>
<tr class="w"><td class="n"><i>5</i></td><td class="k"><svg><use href="#ck"/></svg></td><td>联网异地保</td><td>内外固定材料</td><td><i>910189000000</i></td><td><i>Z</i></td><td class="d"><i>0.2</i></td><td class="d"><i>0</i></td><td class="k"><svg><use href="#ck"/></svg></td><td>其他费</td><td>其他费</td><td>程贤赓</td><td><i>2020011311:37:38</i></td><td style="padding-left:1px"><i>C03250508901</i></td></tr>
<tr class="b"><td class="n"><i>6</i></td><td class="k"><svg><use href="#ck"/></svg></td><td>省医保中心</td><td>内外固定材料</td><td><i>910189000000</i></td><td><i>Z</i></td><td class="d"><i>0.2</i></td><td class="d"><i>0.2</i></td><td class="k"><svg><use href="#ck"/></svg></td><td>其他费</td><td>其他费</td><td>程贤赓</td><td><i>2020011311:37:38</i></td><td style="padding-left:1px"><i>C03250508901</i></td></tr>
<tr class="w"><td class="n"><i>7</i></td><td class="k"><svg><use href="#ck"/></svg></td><td>铁路医保中心</td><td>内外固定材料</td><td><i>910189000000</i></td><td><i>Z</i></td><td class="d"><i>0.2</i></td><td class="d"><i>0.2</i></td><td class="k"><svg><use href="#ck"/></svg></td><td>其他费</td><td>其他费</td><td>程贤赓</td><td><i>2020011311:37:38</i></td><td style="padding-left:1px"><i>C03250508901</i></td></tr>
<tr class="b"><td class="n"><i>8</i></td><td class="k"><svg><use href="#ck"/></svg></td><td>自费</td><td></td><td></td><td><i>Z</i></td><td class="d"><i>1</i></td><td class="d"><i>1</i></td><td class="k"><svg><use href="#un"/></svg></td><td></td><td></td><td>程贤赓</td><td><i>2020011311:37:30</i></td><td></td></tr>
<tr class="w"><td class="n"><i>9</i></td><td class="k"><svg><use href="#ck"/></svg></td><td>绿色通道</td><td></td><td></td><td><i>Z</i></td><td class="d"><i>1</i></td><td class="d"><i>1</i></td><td class="k"><svg><use href="#un"/></svg></td><td></td><td></td><td>程贤赓</td><td><i>2020011311:37:30</i></td><td></td></tr>
<tr class="b"><td class="n"><i>10</i></td><td class="k"><svg><use href="#ck"/></svg></td><td><i>VIP</i></td><td></td><td></td><td><i>Z</i></td><td class="d"><i>1</i></td><td class="d"><i>1</i></td><td class="k"><svg><use href="#un"/></svg></td><td></td><td></td><td>程贤赓</td><td><i>2020011311:37:30</i></td><td></td></tr>
<tr class="w"><td class="n"><i>11</i></td><td class="k"><svg><use href="#ck"/></svg></td><td>福州市保健</td><td></td><td></td><td><i>Z</i></td><td class="d"><i>1</i></td><td class="d"><i>1</i></td><td class="k"><svg><use href="#un"/></svg></td><td></td><td></td><td>程贤赓</td><td><i>2020011311:37:30</i></td><td></td></tr>
<tr class="b"><td class="n"><i>12</i></td><td class="k"><svg><use href="#ck"/></svg></td><td>省一级保健</td><td></td><td></td><td><i>Z</i></td><td class="d"><i>0</i></td><td class="d"><i>0</i></td><td class="k"><svg><use href="#ck"/></svg></td><td></td><td></td><td>程贤赓</td><td><i>2020011311:37:30</i></td><td></td></tr>
</table>
</div>
<!-- grid scrollbar -->
<div class="a" style="left:1271px;top:539px;width:16px;height:260px;background:#ececec"></div>
<div class="a" style="left:1275px;top:545px;border:4px solid transparent;border-bottom:4px solid #333;border-top:0"></div>
<div class="a" style="left:1271px;top:557px;width:15px;height:148px;background:linear-gradient(90deg,#f2f2f2,#d0d0d0);border:1px solid #b0b0b0;border-radius:2px"></div>
<div class="a" style="left:1274px;top:627px;width:9px;height:7px;border-top:1px solid #666;border-bottom:1px solid #666"></div>
<div class="a" style="left:1275px;top:788px;border:4px solid transparent;border-top:4px solid #333;border-bottom:0"></div>
<!-- right-hand buttons -->
<div class="a" style="left:1292px;top:518px;width:144px;height:281px;background:#f0faff;border-left:2px solid #888;border-top:2px solid #666;border-bottom:1px solid #ccc;border-right:1px solid #ccc"></div>
<div class="bt" style="top:529px">生成价表</div>
<div class="bt" style="top:563px">保存<i>(<u>S</u>)</i></div>
<div class="bt" style="top:598px">同步对应</div>
<div class="bt" style="top:633px">同步国家码</div>

<!-- bottom toolbar -->
<div class="a" style="left:316px;top:800px;width:1121px;height:38px;background:#ffffe0"></div>
<div class="a" style="left:316px;top:802px;width:1121px;height:1px;background:#999"></div>
<div class="sep" style="left:373px"></div><div class="sep" style="left:436px"></div><div class="sep" style="left:500px"></div><div class="sep" style="left:562px"></div><div class="sep" style="left:736px"></div><div class="sep" style="left:798px"></div>
<svg class="ic" style="left:336px;top:809px" width="13" height="13"><path d="M4.5 0H8.5V4.5H13V8.5H8.5V13H4.5V8.5H0V4.5H4.5Z" fill="#1560d0"/></svg>
<div class="lb" style="left:310px">新增<i>(A)</i></div>
<svg class="ic" style="left:398px;top:808px" width="15" height="14" viewBox="0 0 15 14"><rect x=".5" y=".5" width="8" height="9" fill="#fff" stroke="#111"/><rect x="5.5" y="3.5" width="9" height="10" fill="#fff" stroke="#111"/><path d="M7 6H13M7 8H13M7 10H13M2 3H6" stroke="#1848b0"/></svg>
<div class="lb" style="left:373px">复制<i>(M)</i></div>
<svg class="ic" style="left:461px;top:807px" width="15" height="16" viewBox="0 0 15 16"><rect x=".5" y="4.5" width="13" height="11" fill="#f6e050" stroke="#111"/><path d="M6 12L13 2 15 4 8 13Z" fill="#e0b020" stroke="#111" stroke-width=".7"/></svg>
<div class="lb" style="left:436px">修改<i>(E)</i></div>
<svg class="ic" style="left:525px;top:808px" width="13" height="14" viewBox="0 0 13 14"><path d="M1 1L12 13M12 1L1 13" stroke="#e01818" stroke-width="2.6"/><rect x="5.4" y="4" width="2.2" height="6" fill="#111"/></svg>
<div class="lb" style="left:500px">停用<i>(T)</i></div>
<svg class="ic" style="left:586px;top:809px" width="14" height="13" viewBox="0 0 14 13"><path d="M1 7L5 12 13 2" fill="none" stroke="#a6a6a6" stroke-width="3"/></svg>
<div class="lb gy" style="left:563px">保存<i>(S)</i></div>
<svg class="ic" style="left:642px;top:810px" width="14" height="12" viewBox="0 0 14 12"><path d="M0 5L5 .5V3H11C13 3 14 5 14 7V11H11V7H5V10Z" fill="#a6a6a6"/></svg>
<div class="lb gy" style="left:617px">取消<i>(C)</i></div>
<svg class="ic" style="left:695px;top:807px" width="17" height="16" viewBox="0 0 17 16"><path d="M1 1H5L7 3V9H1Z" fill="#fff" stroke="#4a78c0"/><path d="M10 1H14L16 3V9H10Z" fill="#f6df80" stroke="#a08020"/><path d="M3 14H14M11 12L14 14 11 16" fill="none" stroke="#1848b0"/></svg>
<div class="lb" style="left:672px">导入<i>(R)</i></div>
<svg class="ic" style="left:759px;top:806px" width="17" height="17" viewBox="0 0 17 17"><rect x="1" y="2" width="12" height="14" fill="#fff" stroke="#333"/><path d="M1 1H13" stroke="#333" stroke-dasharray="1 1" stroke-width="2"/><path d="M3 6H11M3 9H9M3 12H7" stroke="#666"/><path d="M8 13L15 4 16.5 5.5 10 14Z" fill="#e0b020" stroke="#1848b0" stroke-width=".6"/></svg>
<div class="lb" style="left:735px">发送消息</div>
<svg class="ic" style="left:822px;top:807px" width="16" height="16" viewBox="0 0 16 16"><rect x="1" y="1" width="8" height="14" fill="#dde4ee" stroke="#6c7a90"/><path d="M1 1L6 3V16L1 14Z" fill="#a9b5c8"/><path d="M15 6.5H11V4L7 8 11 12V9.5H15Z" fill="#1f6ad8"/></svg>
<div class="lb" style="left:798px">退出<i>(X)</i></div>

<!-- status bar -->
<div class="a" style="left:0;top:838px;width:1440px;height:2px;background:#2a63b8"></div>
<div class="a" style="left:0;top:840px;width:1440px;height:20px;background:linear-gradient(#d6e5fa,#a0bfea)"></div>
<div class="st" style="left:2px;width:141px">翁长风</div>
<div class="st" style="left:146px;width:111px">信息仓库</div>
<div class="st" style="left:260px;width:254px">福建中医药大学附属人民医院<i>&lt;H35010300363&gt;</i></div>
<div class="st" style="left:517px;width:171px">易联众医院信息综合管理平台</div>
<div class="st" style="left:691px;width:142px"><i>2025</i>年<i>01</i>月<i>16</i>日 星期四</div>
<div class="st" style="left:835px;width:602px"></div>

<!-- taskbar -->
<div class="a" style="left:0;top:860px;width:1440px;height:40px;background:#a6bfda;border-top:1px solid #3f4f60"></div>
<div class="a" style="left:0;top:861px;width:60px;height:39px;background:#8396ad"></div>
<div class="a" style="left:1182px;top:861px;width:258px;height:39px;background:#8090a8"></div>
<div class="a" style="left:9px;top:863px;width:36px;height:36px;border-radius:50%;background:radial-gradient(circle at 50% 30%,#5ba8e0,#0f3f78 70%,#06203f);border:1px solid #223b58"></div>
<svg class="ic" style="left:15px;top:870px" width="24" height="22" viewBox="0 0 24 22"><path d="M2 6C5 3 8 4 11 5L9 11C6 10 4 10 1 12Z" fill="#e8562a"/><path d="M12 5C15 7 18 6 22 3L20 10C17 12 14 12 10 11Z" fill="#7fbf32"/><path d="M1 13C4 11 6 11 9 12L7 18C5 17 2 17 0 19Z" fill="#3b9be8"/><path d="M10 12C13 13 16 13 20 11L18 18C15 20 11 19 8 18Z" fill="#f0c020"/></svg>
<div class="tb" style="left:60px;width:50px;background:linear-gradient(#c6d8ea,#a9c1da)"></div>
<svg class="ic" style="left:70px;top:866px" width="32" height="30" viewBox="0 0 32 30"><path d="M2 4H12L15 7H29V24H2Z" fill="#f2cc60" stroke="#c09a30"/><rect x="4" y="2" width="24" height="9" fill="#fff5c8"/><rect x="8" y="3" width="3" height="3" fill="#30a030"/><rect x="14" y="3" width="3" height="3" fill="#d03030"/><rect x="20" y="4" width="3" height="3" fill="#3080d0"/><path d="M1 11H30L28 25H3Z" fill="#fbe79a"/><path d="M8 28V20H24V28" fill="none" stroke="#6fb0e0" stroke-width="3"/></svg>
<div class="a" style="left:113px;top:862px;width:1px;height:37px;background:#6f8296"></div><div class="a" style="left:117px;top:862px;width:1px;height:37px;background:#6f8296"></div>
<div class="tb" style="left:121px;width:59px"></div>
<div class="a" style="left:136px;top:866px;width:30px;height:30px;border-radius:50%;background:conic-gradient(from -60deg,#dd4b3e 0 130deg,#fbc02d 130deg 250deg,#2e9e4f 250deg 360deg)"></div>
<div class="a" style="left:144px;top:874px;width:14px;height:14px;border-radius:50%;background:#3f86e8;border:2px solid #fff"></div>
<div class="tb" style="left:183px;width:60px"></div>
<svg class="ic" style="left:197px;top:867px" width="32" height="29" viewBox="0 0 32 29"><path d="M5 1H29L27 20H3Z" fill="#c8ccd0" stroke="#777"/><path d="M7 3H27L25.5 18H5Z" fill="#15231a"/><path d="M8 14L11 8 13 13 16 6 19 13 22 9 24 14" fill="none" stroke="#58d040"/><path d="M10 21H22L25 27H8Z" fill="#aab0b6" stroke="#777"/></svg>
<div class="tb" style="left:246px;width:59px"></div>
<svg class="ic" style="left:259px;top:865px" width="34" height="32" viewBox="0 0 34 32"><rect x="10" y="3" width="22" height="22" rx="3" fill="#b84f86"/><ellipse cx="21" cy="4" rx="11" ry="3.5" fill="#d377a8"/><path d="M10 11C14 14 28 14 32 11M10 18C14 21 28 21 32 18" fill="none" stroke="#e5a5c8"/><circle cx="11" cy="22" r="8" fill="#999" stroke="#666" stroke-dasharray="3 1.5" stroke-width="2"/><circle cx="11" cy="22" r="3" fill="#eee"/></svg>
<div class="tb" style="left:308px;width:54px"></div>
<svg class="ic" style="left:319px;top:867px" width="31" height="28" viewBox="0 0 31 28"><path d="M8 2H30V26H2Z" fill="#f0f2f4" stroke="#aab"/><path d="M8 3H28V20L2 24Z" fill="#7ab8da"/><path d="M8 2H30" stroke="#555" stroke-width="2" stroke-dasharray="1.5 1.5"/></svg>
<div class="a" style="left:365px;top:862px;width:1px;height:37px;background:#6f8296"></div>
<div class="tb" style="left:370px;width:58px"></div>
<svg class="ic" style="left:383px;top:871px" width="32" height="20" viewBox="0 0 32 20"><path d="M1 1H8L11 12 16 1 21 12 24 1H31L25 19H19L16 12 13 19H7Z" fill="#ef2d20"/></svg>
<div class="tb" style="left:431px;width:55px;background:linear-gradient(#d8e6f4,#bcd0e6)"></div>
<svg class="ic" style="left:443px;top:865px" width="31" height="31"><use href="#lg"/></svg>
<div class="a" style="left:488px;top:862px;width:1px;height:37px;background:#6f8296"></div>
<div class="tb" style="left:493px;width:59px"></div>
<svg class="ic" style="left:508px;top:865px" width="32" height="32" viewBox="0 0 32 32"><path d="M2 1H22V22H2Z" fill="#eef4ea" stroke="#5fae50" stroke-width="1.4"/><rect x="6" y="9" width="25" height="20" fill="#e6ece2" stroke="#99a"/><path d="M13 9V29M19 9V29M25 9V29M6 14H31M6 19H31M6 24H31" stroke="#3f8a4a" stroke-width="2"/><path d="M3 7L11 19M11 7L3 19" stroke="#1c6d2d" stroke-width="3"/></svg>

<!-- tray -->
<svg class="ic" style="left:1195px;top:872px" width="16" height="17" viewBox="0 0 16 17"><path d="M3 5C6 1 12 5 14 1" fill="none" stroke="#667"/><rect x=".5" y="6.5" width="15" height="9" rx="1" fill="#c4c8cc" stroke="#555"/><path d="M2 9H14M2 11H14M3 13.5H13" stroke="#556" stroke-dasharray="1.2 .8"/></svg>
<div class="a" style="left:1218px;top:873px;width:15px;height:16px;border-radius:50%;background:#1440b0;border:1.5px solid #b8c4d4;color:#fff;font:bold 11px/13px 'Liberation Sans';text-align:center">?</div>
<div class="a" style="left:1243px;top:873px;width:6px;height:4px;border:1px solid #fff;border-top-width:2px"></div>
<div class="a" style="left:1246px;top:871px;width:6px;height:4px;border:1px solid #fff;border-top-width:2px;background:#8090a8"></div>
<div class="a" style="left:1245px;top:882px;border:3px solid transparent;border-top:3px solid #fff;border-bottom:0"></div>
<div class="a" style="left:1261px;top:879px;border:4px solid transparent;border-bottom:4px solid #f0f0f0;border-top:0"></div>
<svg class="ic" style="left:1282px;top:874px" width="18" height="14" viewBox="0 0 18 14"><path d="M0 14L12 1 10 14Z" fill="#f01010"/><path d="M11 7L18 14H10Z" fill="#18c030"/></svg>
<svg class="ic" style="left:1312px;top:873px" width="16" height="16" viewBox="0 0 16 16"><path d="M1 5H4L8 1V15L4 11H1Z" fill="#eef0f2" stroke="#666" stroke-width=".6"/><circle cx="11.5" cy="10.5" r="3.8" fill="#fff" stroke="#d81818" stroke-width="1.8"/><path d="M9 8L14 13" stroke="#d81818" stroke-width="1.6"/></svg>
<div class="a" style="left:1340px;top:862px;width:82px;text-align:center;font:13px/18px 'Liberation Sans',sans-serif;color:#eef2f6">09:58</div>
<div class="a" style="left:1340px;top:880px;width:82px;text-align:center;font:13px/18px 'Liberation Sans',sans-serif;color:#eef2f6">2025-01-16</div>
<div class="a" style="left:1427px;top:861px;width:13px;height:39px;background:linear-gradient(90deg,#5f6e7e,#84939f);border:1px solid #3f4f60"></div>
</body></html>
